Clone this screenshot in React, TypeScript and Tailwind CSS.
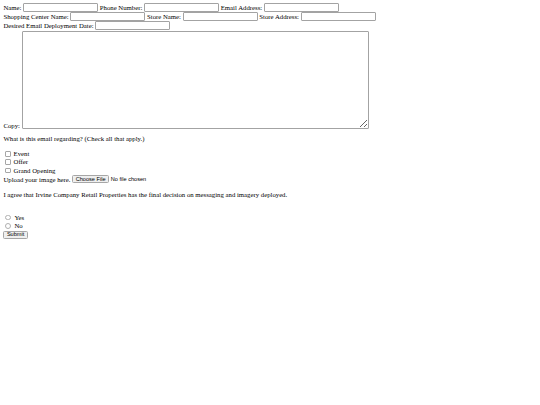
import React from "react";

const field =
  "w-[75px] h-[9px] border border-[#a3a3a3] bg-white rounded-[1px] shrink-0";

const sans = "font-['Liberation_Sans',Arial,sans-serif]";

export default function App() {
  return (
    <div className="pl-[3.4px] pt-[3px] text-[6.75px] leading-[7.8px] text-black bg-white font-['Liberation_Serif','Times_New_Roman',serif]">
      <form onSubmit={(e) => e.preventDefault()}>
        {/* Contact rows */}
        <div className="flex items-center gap-[1.7px] h-[9px] whitespace-nowrap">
          <span>Name:</span>
          <input type="text" className={field} />
          <span>Phone Number:</span>
          <input type="text" className={field} />
          <span>Email Address:</span>
          <input type="text" className={field} />
        </div>
        <div className="flex items-center gap-[1.7px] h-[9px] whitespace-nowrap">
          <span>Shopping Center Name:</span>
          <input type="text" className={field} />
          <span>Store Name:</span>
          <input type="text" className={field} />
          <span>Store Address:</span>
          <input type="text" className={field} />
        </div>
        <div className="flex items-center gap-[1.7px] h-[9px] whitespace-nowrap">
          <span>Desired Email Deployment Date:</span>
          <input type="text" className={field} />
        </div>

        {/* Copy */}
        <div className="flex items-end gap-[1.7px] mt-[0.5px]">
          <span className="leading-[7px]">Copy:</span>
          <textarea className="w-[347px] h-[98px] border border-[#a3a3a3] rounded-[1px] resize-y bg-white" />
        </div>

        <p className="my-[6.75px]">
          What is this email regarding? (Check all that apply.)
        </p>

        {/* Topics */}
        {["Event", "Offer", "Grand Opening"].map((t) => (
          <label key={t} className="flex items-center h-[8.3px]">
            <input
              type="checkbox"
              className="appearance-none w-[5.5px] h-[5.5px] m-0 ml-[1.7px] mr-[3px] border border-[#a6a6a6] rounded-[1px] bg-white checked:bg-[#0075ff] checked:border-[#0075ff]"
            />
            {t}
          </label>
        ))}

        {/* Upload */}
        <div className="flex items-center gap-[1.7px] h-[9.5px]">
          <span>Upload your image here.</span>
          <span
            className={`inline-flex items-center h-[8px] px-[2.5px] border border-[#a6a6a6] bg-[#efefef] rounded-[1.5px] text-[5.6px] ${sans}`}
          >
            Choose File
          </span>
          <span className={`text-[5.6px] ${sans}`}>No file chosen</span>
        </div>

        <p className="my-[6.75px]">
          I agree that Irvine Company Retail Properties has the final decision
          on messaging and imagery deployed.
        </p>
        <div className="h-[8px]" />

        {["Yes", "No"].map((t) => (
          <label key={t} className="flex items-center h-[8.3px]">
            <input
              type="radio"
              name="agree"
              className="appearance-none w-[5.5px] h-[5.5px] m-0 ml-[2.1px] mr-[3.4px] border border-[#b0b0b0] rounded-full bg-white checked:border-[2px] checked:border-[#0075ff]"
            />
            {t}
          </label>
        ))}

        <button
          type="submit"
          className={`mt-[0.5px] h-[8px] px-[2.5px] flex items-center border border-[#a6a6a6] bg-[#efefef] rounded-[1.5px] text-[5.6px] ${sans}`}
        >
          Submit
        </button>
      </form>
    </div>
  );
}
